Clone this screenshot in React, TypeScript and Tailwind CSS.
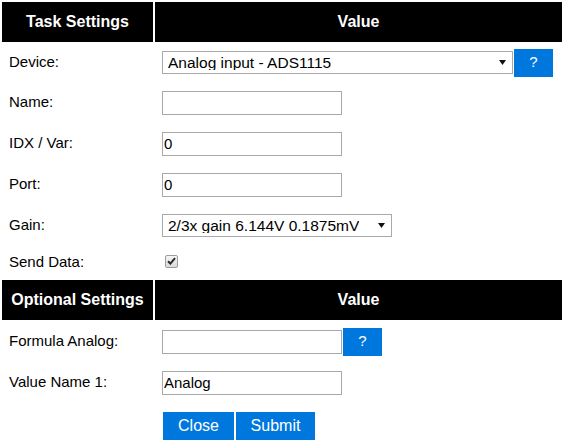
import React from "react";

function Arrow() {
  return (
    <svg width="7" height="5" viewBox="0 0 7 5" className="shrink-0">
      <path d="M0 0 H7 L3.5 5 Z" fill="#111" />
    </svg>
  );
}

function FakeSelect({ value, width }: { value: string; width: string }) {
  return (
    <div
      className={`${width} h-[23px] border border-[#a9a9a9] bg-white flex items-center justify-between pl-[5px] pr-[6px] text-[15.5px] text-black`}
    >
      <span className="truncate leading-none">{value}</span>
      <Arrow />
    </div>
  );
}

function TextBox({ value = "" }: { value?: string }) {
  return (
    <input
      readOnly
      value={value}
      className="w-[180px] h-[24px] border border-[#a9a9a9] bg-white px-[1px] text-[15px] text-black outline-none"
    />
  );
}

function HelpButton() {
  return (
    <div className="w-[39px] h-[28px] bg-[#0077dd] text-white text-[15px] flex items-center justify-center">
      ?
    </div>
  );
}

function Header({ left }: { left: string }) {
  return (
    <>
      <div className="h-[40px] bg-black text-white font-bold text-[16px] flex items-center justify-center">
        {left}
      </div>
      <div className="h-[40px] bg-black text-white font-bold text-[16px] flex items-center justify-center">
        Value
      </div>
    </>
  );
}

function Row({ label, h = "h-[39px]", children }: { label: string; h?: string; children: React.ReactNode }) {
  return (
    <>
      <div className={`${h} flex items-center pl-[7px] text-[15px] text-black`}>{label}</div>
      <div className={`${h} flex items-center gap-[1px] pl-[7px]`}>{children}</div>
    </>
  );
}

export default function App() {
  return (
    <div
      className="w-[565px] h-[445px] overflow-hidden bg-white"
      style={{ fontFamily: '"Liberation Sans", Arial, sans-serif' }}
    >
      <div className="grid grid-cols-[151px_407px] gap-[2px] p-[2px]">
        <Header left="Task Settings" />

        <Row label="Device:" h="h-[37px]">
          <FakeSelect value="Analog input - ADS1115" width="w-[351px]" />
          <HelpButton />
        </Row>
        <Row label="Name:">
          <TextBox />
        </Row>
        <Row label="IDX / Var:">
          <TextBox value="0" />
        </Row>
        <Row label="Port:">
          <TextBox value="0" />
        </Row>
        <Row label="Gain:">
          <FakeSelect value="2/3x gain 6.144V 0.1875mV" width="w-[230px]" />
        </Row>
        <Row label="Send Data:" h="h-[31px]">
          <div className="ml-[3px] mt-[-3px] w-[13px] h-[13px] border border-[#9c9c9c] rounded-[2px] bg-gradient-to-b from-[#f6f6f6] to-[#dadada] flex items-center justify-center">
            <svg width="9" height="8" viewBox="0 0 9 8">
              <path d="M1 4.2 L3.4 6.6 L8 1.2" fill="none" stroke="#2a2a2a" strokeWidth="2" />
            </svg>
          </div>
        </Row>

        <Header left="Optional Settings" />

        <Row label="Formula Analog:">
          <TextBox />
          <HelpButton />
        </Row>
        <Row label="Value Name 1:">
          <TextBox value="Analog" />
        </Row>

        <div className="h-[43px]" />
        <div className="h-[43px] flex items-center gap-[2px] pl-[8px]">
          <div className="w-[71px] h-[28px] bg-[#0077dd] text-white text-[16px] flex items-center justify-center">
            Close
          </div>
          <div className="w-[79px] h-[28px] bg-[#0077dd] text-white text-[16px] flex items-center justify-center">
            Submit
          </div>
        </div>
      </div>
    </div>
  );
}
